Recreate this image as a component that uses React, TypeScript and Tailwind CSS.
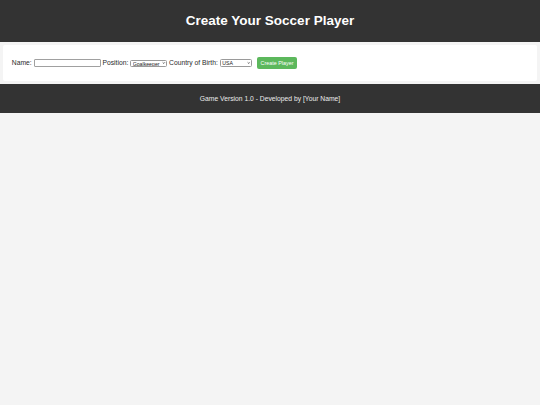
import { useState } from 'react'
import { ChevronDown } from 'lucide-react'

const positions = ['Goalkeeper', 'Defender', 'Midfielder', 'Forward']
const countries = ['USA', 'Brazil', 'Germany', 'Spain', 'France']

function Select({
  id,
  value,
  options,
  onChange,
  className,
}: {
  id: string
  value: string
  options: string[]
  onChange: (v: string) => void
  className: string
}) {
  return (
    <span className={`relative inline-flex ${className}`}>
      <select
        id={id}
        value={value}
        onChange={(e) => onChange(e.target.value)}
        className="h-full w-full appearance-none rounded-[1.5px] border-[0.6px] border-[#9a9a9a] bg-white py-0 pl-[1.5px] text-[5.2px] leading-[6px] text-[#222] outline-none"
      >
        {options.map((o) => (
          <option key={o}>{o}</option>
        ))}
      </select>
      <ChevronDown
        strokeWidth={4.5}
        className="pointer-events-none absolute right-[1.6px] top-1/2 h-[3.6px] w-[3.6px] -translate-y-1/2 text-[#222]"
      />
    </span>
  )
}

export default function App() {
  const [name, setName] = useState('')
  const [position, setPosition] = useState(positions[0])
  const [country, setCountry] = useState(countries[0])

  return (
    <div className="min-h-[405px] bg-[#f4f4f4] font-['Liberation_Sans',Arial,sans-serif] text-[6.75px] text-[#2a2a2a]">
      <header className="flex h-[42px] items-center justify-center bg-[#333333]">
        <h1 className="text-[13.5px] font-bold text-white">Create Your Soccer Player</h1>
      </header>

      <main className="mx-[3.4px] my-[3px] flex h-[36px] items-center rounded-[2px] bg-white px-[8.4px]">
        <form className="flex items-center whitespace-pre" onSubmit={(e) => e.preventDefault()}>
          <label htmlFor="name">Name: </label>
          <input
            id="name"
            value={name}
            onChange={(e) => setName(e.target.value)}
            className="h-[8px] w-[67px] rounded-[1px] border-[0.6px] border-[#a0a0a0] bg-white outline-none"
          />
          <label htmlFor="position"> Position: </label>
          <Select id="position" value={position} options={positions} onChange={setPosition} className="h-[7px] w-[37px]" />
          <label htmlFor="country"> Country of Birth: </label>
          <Select id="country" value={country} options={countries} onChange={setCountry} className="h-[7.6px] w-[32px]" />
          <button
            type="submit"
            className="ml-[5px] h-[12px] w-[40.6px] rounded-[2px] bg-[#5cb85c] text-[5.4px] text-white"
          >
            Create Player
          </button>
        </form>
      </main>

      <footer className="flex h-[29.4px] items-center justify-center bg-[#333333] text-[#ececec]">
        Game Version 1.0 - Developed by [Your Name]
      </footer>
    </div>
  )
}
